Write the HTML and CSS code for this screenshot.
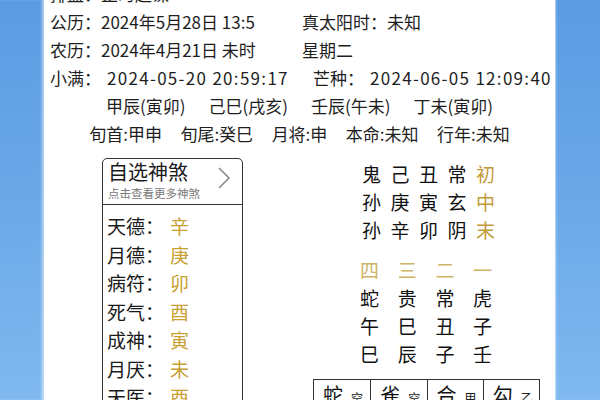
FILE: index.html
```html
<!DOCTYPE html>
<html lang="zh-CN">
<head>
<meta charset="utf-8">
<title>金口诀排盘</title>
<link rel="stylesheet" href="styles.css">
</head>
<body>
<div class="page">
  <div class="side side-left"></div>
  <main class="panel">
    <section class="info">
      <div class="row two"><span class="c1">排盘：正时起课</span></div>
      <div class="row two"><span class="c1">公历：2024年5月28日 13:5</span><span>真太阳时：未知</span></div>
      <div class="row two"><span class="c1">农历：2024年4月21日 未时</span><span>星期二</span></div>
      <div class="row jq"><span>小满：<span class="dt">2024-05-20 20:59:17</span></span><span>芒种：<span class="dt">2024-06-05 12:09:40</span></span></div>
      <div class="row center gz"><span>甲辰(寅卯)</span><span>己巳(戌亥)</span><span>壬辰(午未)</span><span>丁未(寅卯)</span></div>
      <div class="row center xs"><span>旬首:甲申</span><span>旬尾:癸巳</span><span>月将:申</span><span>本命:未知</span><span>行年:未知</span></div>
    </section>
    <section class="board">
      <div class="card">
        <div class="card-head">
          <div>
            <div class="card-title">自选神煞</div>
            <div class="card-sub">点击查看更多神煞</div>
          </div>
          <svg class="chev" width="14" height="24" viewBox="0 0 14 24"><path d="M2 2 L12 12 L2 22" fill="none" stroke="#8a8a8a" stroke-width="1.6"/></svg>
        </div>
        <div class="card-body">
          <div class="ss"><span>天德：</span><span class="val">辛</span></div>
          <div class="ss"><span>月德：</span><span class="val">庚</span></div>
          <div class="ss"><span>病符：</span><span class="val">卯</span></div>
          <div class="ss"><span>死气：</span><span class="val">酉</span></div>
          <div class="ss"><span>成神：</span><span class="val">寅</span></div>
          <div class="ss"><span>月厌：</span><span class="val">未</span></div>
          <div class="ss"><span>天医：</span><span class="val">酉</span></div>
          <div class="ss"><span>地医：</span><span class="val">卯</span></div>
        </div>
      </div>
      <div class="right">
        <div class="grid5">
          <span>鬼</span><span>己</span><span>丑</span><span>常</span><span class="gold">初</span>
          <span>孙</span><span>庚</span><span>寅</span><span>玄</span><span class="gold">中</span>
          <span>孙</span><span>辛</span><span>卯</span><span>阴</span><span class="gold">末</span>
        </div>
        <div class="grid4">
          <span class="lgold">四</span><span class="lgold">三</span><span class="lgold">二</span><span class="lgold">一</span>
          <span>蛇</span><span>贵</span><span>常</span><span>虎</span>
          <span>午</span><span>巳</span><span>丑</span><span>子</span>
          <span>巳</span><span>辰</span><span>子</span><span>壬</span>
        </div>
        <div class="boxes">
          <div class="box"><span class="big">蛇</span><span class="small">空</span></div>
          <div class="box"><span class="big">雀</span><span class="small">空</span></div>
          <div class="box"><span class="big">合</span><span class="small">甲</span></div>
          <div class="box"><span class="big">勾</span><span class="small">乙</span></div>
        </div>
      </div>
    </section>
  </main>
  <div class="side side-right"></div>
</div>
</body>
</html>
```
FILE: styles.css
```css
html, body {
  margin: 0;
  padding: 0;
  background: #ffffff;
}
body {
  font-family: "Noto Sans CJK SC", "Noto Sans", sans-serif;
  color: #1e1e1e;
}
.page {
  display: flex;
  width: 600px;
  height: 400px;
  overflow: hidden;
}
.side {
  flex: none;
  height: 400px;
  background: linear-gradient(180deg, #5a9be2 0%, #6aa8e8 50%, #80b9f0 100%);
}
.side-left {
  width: 44px;
  box-shadow: inset -3px 0 3px -1px rgba(255,255,255,0.55);
}
.side-right {
  width: 45px;
  box-shadow: inset 2px 0 2px -1px rgba(255,255,255,0.6);
}
.panel {
  flex: none;
  width: 511px;
  height: 400px;
  background: #ffffff;
  overflow: hidden;
}
.info {
  margin-top: -20px;
  font-size: 17px;
  line-height: 28px;
}
.row {
  white-space: nowrap;
}
.two {
  display: grid;
  grid-template-columns: 252px auto;
  padding-left: 6px;
}
.jq {
  display: grid;
  grid-template-columns: 263px auto;
  padding-left: 6px;
}
.dt {
  margin-left: 6px;
  letter-spacing: 1.3px;
}
.center {
  display: flex;
  justify-content: center;
}
.gz { gap: 23px; }
.xs { gap: 18.5px; }

.board {
  display: flex;
  padding-top: 10px;
}
.card {
  flex: none;
  margin-left: 58px;
  width: 141px;
  height: 300px;
  box-sizing: border-box;
  border: 1.5px solid #333;
  border-radius: 5px;
}
.card-head {
  display: flex;
  justify-content: space-between;
  align-items: center;
  padding: 1px 11px 4px 5px;
  border-bottom: 1.5px solid #333;
}
.card-title {
  font-size: 20px;
  line-height: 24px;
  color: #1a1a1a;
}
.card-sub {
  margin-top: 2px;
  font-size: 11.5px;
  line-height: 14px;
  color: #7a7a7a;
}
.chev { display: block; margin-top: -4px; }
.card-body {
  padding: 7px 0 0 4px;
}
.ss {
  font-size: 19px;
  line-height: 28.5px;
  color: #1a1a1a;
}
.val {
  margin-left: 6px;
  color: #c9a032;
}
.right {
  margin-left: 70px;
  padding-top: 2px;
  width: 227px;
}
.grid5 {
  display: grid;
  grid-template-columns: repeat(5, 28.5px);
  padding-left: 49px;
  font-size: 19px;
  line-height: 28px;
  color: #111;
}
.grid4 {
  display: grid;
  grid-template-columns: repeat(4, 37.7px);
  padding-left: 47px;
  margin-top: 12px;
  font-size: 19px;
  line-height: 28px;
  color: #111;
}
.gold { color: #c29a38; }
.lgold { color: #cdb466; }
.boxes {
  display: grid;
  grid-template-columns: repeat(4, 1fr);
  margin-top: 11px;
  height: 40px;
  border: 1.5px solid #333;
  border-bottom: none;
}
.box {
  display: flex;
  align-items: baseline;
  padding: 2px 0 0 9px;
  border-left: 1.5px solid #333;
}
.box:first-child { border-left: none; }
.big {
  font-size: 20px;
  line-height: 26px;
  color: #111;
}
.small {
  margin-left: 8px;
  font-size: 12px;
  color: #222;
}
```
